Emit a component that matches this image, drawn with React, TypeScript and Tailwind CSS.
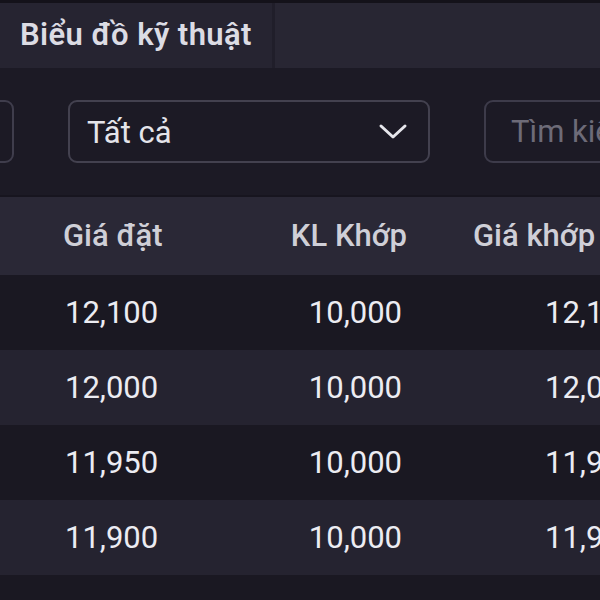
import React from "react";

const rows = [
  { a: "12,100", b: "10,000", c: "12,100" },
  { a: "12,000", b: "10,000", c: "12,000" },
  { a: "11,950", b: "10,000", c: "11,950" },
  { a: "11,900", b: "10,000", c: "11,900" },
];

export default function App() {
  return (
    <div
      className="w-[600px] h-[600px] overflow-hidden bg-[#1a1822] flex flex-col whitespace-nowrap"
      style={{ fontFamily: "Roboto, 'Noto Sans', sans-serif" }}
    >
      {/* top strip */}
      <div className="h-[3px] bg-[#14121a] shrink-0" />
      {/* tab bar */}
      <div className="h-[65px] shrink-0 flex bg-[#282633]">
        <div className="w-[272px] shrink-0 h-full bg-[#262431] flex items-center pl-[20px] text-[31px] font-semibold text-[#dcdce4] tracking-[0.4px]">
          Biểu đồ kỹ thuật
        </div>
        <div className="w-[3px] shrink-0 h-full bg-[#201e2a]" />
        <div className="flex-1" />
      </div>
      {/* filter row */}
      <div className="h-[129px] shrink-0 bg-[#1c1a25] flex items-center gap-[54px] border-b-2 border-[#17151f]">
        <div className="-ml-[46px] w-[60px] h-[63px] shrink-0 rounded-[9px] border-2 border-[#3f3d4c]" />
        <div className="w-[362px] h-[63px] shrink-0 rounded-[9px] border-2 border-[#43414f] flex items-center justify-between pl-[17px] pr-[20px]">
          <span className="text-[31px] text-[#e4e4ea] pt-[4px]">Tất cả</span>
          <svg width="30" height="18" viewBox="0 0 30 18" fill="none">
            <path d="M3 3 L15 14 L27 3" stroke="#e6e6ec" strokeWidth="3" strokeLinecap="round" strokeLinejoin="round" />
          </svg>
        </div>
        <div className="w-[200px] h-[63px] shrink-0 rounded-[9px] border-2 border-[#3d3b4a] flex items-center pl-[25px] pt-[2px] text-[31px] text-[#6d6b78]">
          Tìm kiếm
        </div>
      </div>
      {/* header */}
      <div className="h-[78px] shrink-0 bg-[#2a2836] flex items-center text-[31px] font-medium text-[#cfcfd7]">
        <div className="w-[250px] shrink-0 pl-[63px]">Giá đặt</div>
        <div className="w-[157px] shrink-0 text-right">KL Khớp</div>
        <div className="shrink-0 pl-[66px]">Giá khớp</div>
      </div>
      {rows.map((r, i) => (
        <div
          key={i}
          className={`h-[75px] shrink-0 flex items-center pt-[2px] text-[31px] text-[#ececf2] ${i % 2 === 0 ? "bg-[#1a1822]" : "bg-[#252330]"}`}
        >
          <div className="w-[250px] shrink-0 pl-[65px]">{r.a}</div>
          <div className="w-[152px] shrink-0 text-right">{r.b}</div>
          <div className="shrink-0 pl-[143px]">{r.c}</div>
        </div>
      ))}
      <div className="flex-1 bg-[#1a1822]" />
    </div>
  );
}
